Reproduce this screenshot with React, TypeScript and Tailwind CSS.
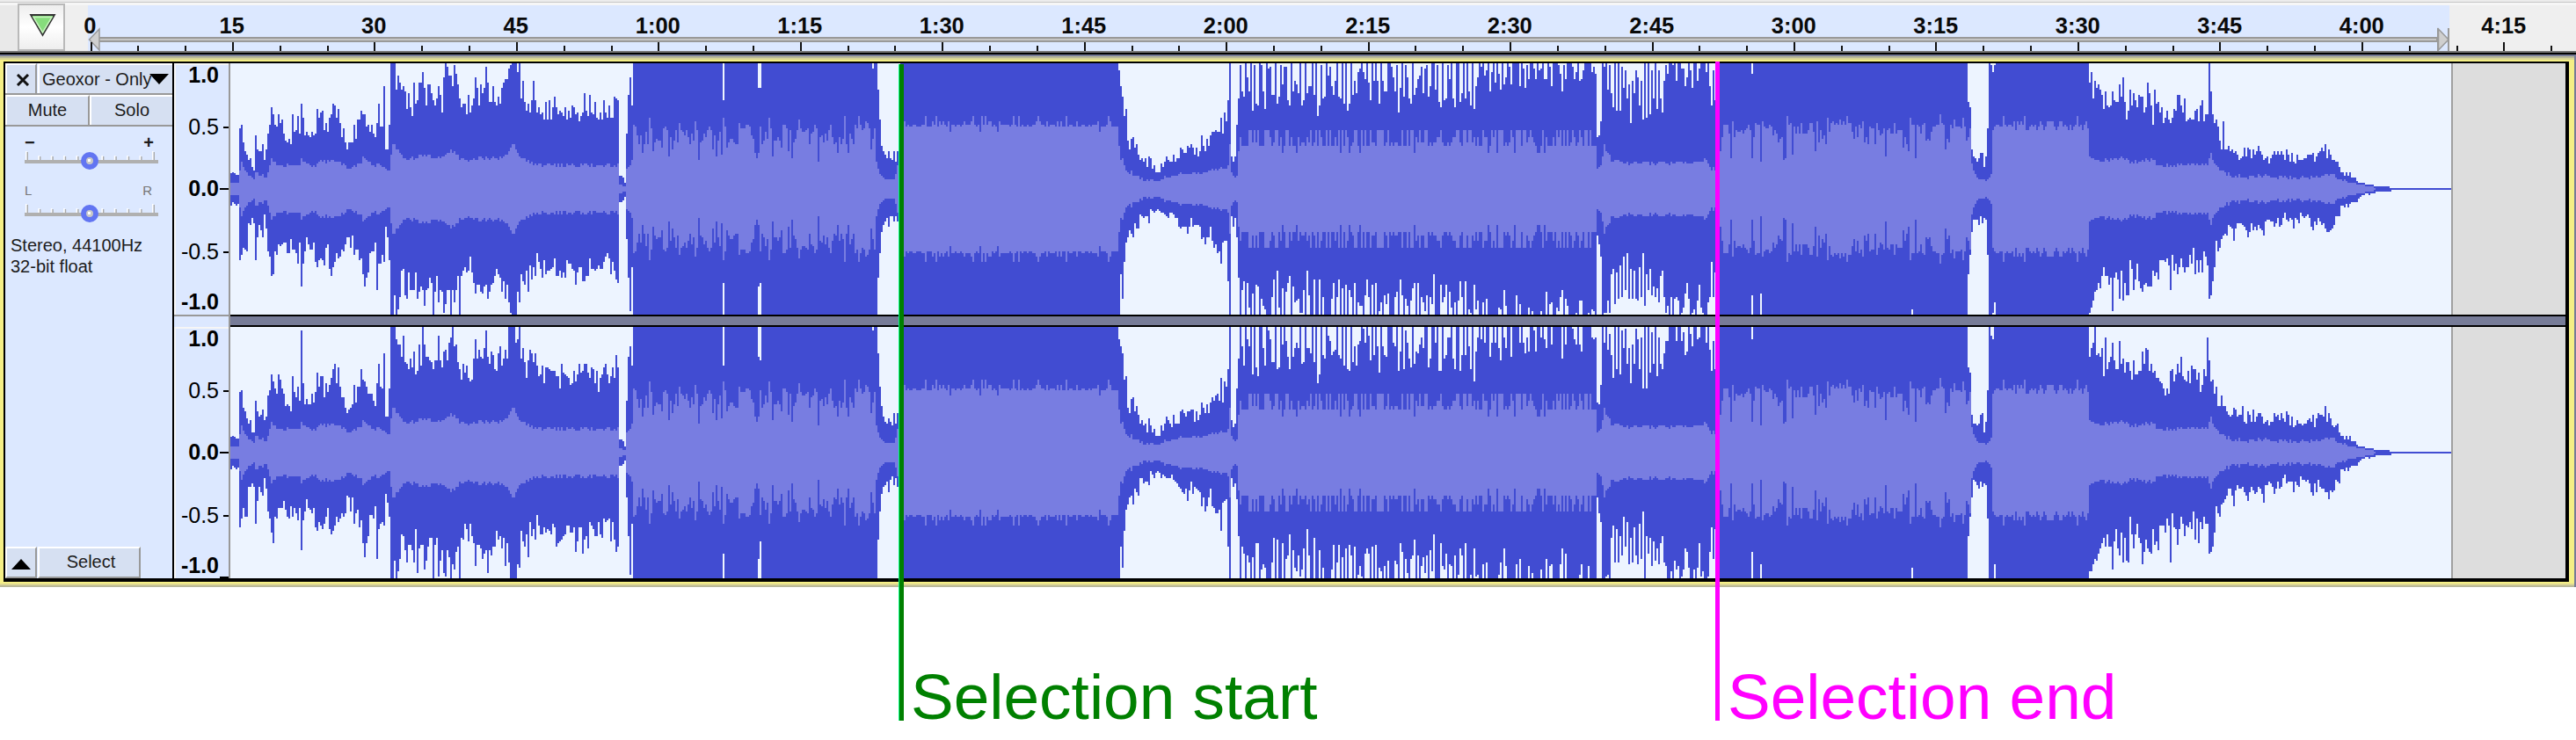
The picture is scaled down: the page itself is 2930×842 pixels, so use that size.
import React from "react";

const START = 262;
const END = 2788;
const COLS = (END - START) / 2;
const CENTER = 465;
const CEIL = 36;
const FLOOR = 894;

/* Runs of sample levels: first column (px), then one level per 2px column.
   Levels are thirds of a pixel below y = 60. */
type Run = [number, string];

const PEAK_TOP: Run[] = [
  [262, "412 408 412 418 418 258 246 306 336 348 366 360 390 402 282 330 336 336 312 366 330 276 246 186 210 246 252 210 240 228 276 300 306 294 312 210 270 264 216 276 174 222 282 270 282 288 270 282 276 192 222 204 198 264 240 270 222 210 174 180 222 192 240 288 258 306 330 306 306 306 246 294 228 228 198 210 210 252 246 270 246 276 288 240 174 252 252 114 330 330 246 36 36 36 126 78 102 126 114 132 192 138 186 216 102 174 162 102 102 66 120 180 108 108 138 162 180 156 114 144 204 84 36 48 78 78 114 42 72 108 156 186 174 174 210 144 204 180 156 84 120 180 108 138 120 48 102 168 168 114 168 180 150 174 120 102 90 90 54 42 36 36 36 66 36 156 96 168 198 174 204 162 96 162 204 186 210 204 228 168 228 162 228 186 150 186 210 198 204 216 186 228 198 222 180 186 210 204 234 216 204 138 198 216 144 204 210 168 222 228 204 228 162 204 222 180 222 222 150 156 162 420 420 426 444 276 144 84 180"],
  [822, "162"], [862, "120 120"], [992, "54"],
  [998, "126 228 318 336 348 360 336 360 366 336 372 336 228"],
  [1272, "60 114 150 216 192 300 330 294 288 324 312 348 366 360 372 360 390 354 360 396 384 408 408 408 378 390 372 354 366 372 372 348 372 360 360 324 330 342 342 318 324 312 324 348 324 354 336 282 318 336 294 318 282 270 270 264 270 270 222 276 204 234 162 36 354 372 354 246 156 42 132 150 36 84 132 36 198 42 174 180 36 42 132 192 36 54 48 144 144 36 174 150 42 108 48 48 162 180 36 132 96 108 138 36 180 162 36 138 114 114 36 144 36 216 180 42 156 150 36 78 48 114 144 96 36 150 156 36 174 36 198 174 36 144 96 138 66 54 36 66 90 36 102 162 36 96 36 96 174 36 96 132 132 36 36 48 84 132 42 204 120 36 150 42 84 156 174 36 144 120 90 78 48 138 54 42 150 114 36 36 126 42 168 186 36 162 156 42 90 36 156 186 36 36 168 168 36 150 36 42 114 36 192"],
  [1660, "168 138 36 156 36 132 180 36 192 114 84 36 48 36 78 60 36 132 66 36 102 36 72 126 36 108 84 36 48 108 36 36 36 36 114 36 54 120 42 90 36 36 54 90 36 60 54 36 90 90 36 48 114 36 36 36 42 72 132 42 90 36 36 36 48 90 66 36 96 90 60 36 36 36 36 66 48 72 288 282 234 36 48 36 126 42 138 186 36 198 36 198 48 120 60 156 108 240 96 138 60 84 180 96 228 36 222 36 210 60 156 36 192 60 156 204 96 42 72 36 36 42 36 96 36 36 54 54 114 84 36 60 120 36 36 96 54 36 36 36 66 36 114 180 60 162"],
  [1992, "72"],
  [2238, "168 186 330 354 360 372 360 342 342 390 354 258 36 42 66 42"],
  [2376, "102 66 156 96 120 108 126 144 192 132 180 186 180 132 162 168 168 108 150 84 168 228 198 126 180 138 162 186 144 150 150 204 186 102 138 180 246 126 174 168 204 186 240 222 198 228 240 222 192 198 144 144 180 204 156 234 228 222 228 228 198 192 234 180 162 234 210 210 36 132 210 240 228 252 300 330 234 330 330 318 336 330 342 336 348 366 360 354 324 354 324 330 360 330 348 336 318 336 348 366 360 354 378 360 348 336 348 336 348 336 348 366 330 348 372 342 372 378 348 366 366 366 360 360 348 348 348 342 372 354 342 336 324 336 312 360 330 348 366 366 372 372 390 408 408 420 408 420 408 426 426 426 438 444 444 444 444 450 450 450 450 450 456 456 456 456 456 456 456 456 456 462"],
];

const PEAK_BOTTOM: Run[] = [
  [262, "522 510 516 522 516 708 690 666 672 678 582 588 564 582 708 630 588 606 630 552 600 678 696 762 756 678 690 654 660 654 648 648 684 684 636 672 672 684 720 648 798 720 678 630 654 672 672 648 714 732 708 702 708 726 666 654 738 762 732 714 684 702 696 672 678 654 630 630 666 624 690 672 672 708 702 756 798 768 750 684 678 678 648 810 720 720 690 714 594 630 708 894 894 828 894 876 834 744 738 828 840 750 810 810 810 750 840 816 798 810 864 810 804 768 786 894 816 762 852 810 816 888 858 810 810 894 810 852 810 762 894 762 744 732 750 744 696 750 786 822 792 792 816 822 798 792 840 816 792 786 762 738 756 768 816 780 840 792 852 888 894 894 894 816 852 756 780 792 744 816 726 774 732 762 684 714 738 768 708 756 744 744 738 732 702 762 762 744 768 750 768 708 720 720 738 744 792 750 732 732 780 780 762 762 702 738 738 744 738 726 738 738 714 696 684 702 756 714 744 774 786 510 510 504 492 636 768 882 732"],
  [822, "786"], [862, "798 786"],
  [998, "768 684 612 588 576 564 594 558 558 576 558 576 708"],
  [1274, "756 840 714 648 630 606 618 630 582 600 600 552 558 564 558 558 582 534 540 546 540 534 540 546 546 552 558 564 546 546 552 564 564 594 600 594 594 594 618 594 564 594 588 588 588 594 636 630 654 630 630 594 642 666 654 684 678 720 648 642 642 780 894 558 594 564 630 768 894 810 780 894 786 870 894 822 894 792 798 894 840 864 876 894 894 894 834 774 894 744 870 894 804 894 816 786 762 894 798 852 846 840 888 888 810 894 744 828 894 894 774 894 894 774 894 834 894 894 894 894 840 786 894 834 774 894 804 894 792 894 810 834 894 786 894 852 864 864 894 828 774 834 894 792 894 786 894 882 852 894 828 858 822 894 894 894 834 816 894 774 828 894 840 864 894 846 804 786 894 786 894 834 852 882 828 894 834 858 756 894 894 894 792 852 834 792 894 816 870 894 852 894 846 852 874 816 780 894 864 780"],
  [1660, "780 834 894 780 894 876 888 894 792 876 846 894 894 852 894 840 894 894 894 894 894 894 870 876 894 810 864 894 894 894 894 894 828 894 858 894 894 894 894 870 894 882 894 894 894 894 882 894 894 816 894 858 852 894 894 870 882 834 810 894 840 864 894 894 894 894 888 894 846 846 894 894 894 888 894 876 882 894 624 654 696 894 888 888 846 888 756 738 858 750 840 726 834 696 810 684 840 738 840 744 840 846 732 834 684 864 756 810 738 828 798 834 804 852 762 744 834 888 864 894 834 894 840 834 846 894 888 870 822 786 840 894 888 876 894 846 792 870 888 894 894 852 834 714 834 750"],
  [1992, "828"], [2002, "822"], [2174, "876"],
  [2238, "756 690 612 570 570 570 588 558 582 564 570 690 894 894 888 852"],
  [2376, "888 870 846 816 810 786 804 762 732 762 762 792 768 882 768 750 774 840 744 846 786 828 828 708 738 810 774 720 780 804 816 792 786 798 798 798 744 762 750 774 708 708 708 714 702 726 810 690 744 720 756 732 702 732 750 732 732 690 720 666 756 708 750 708 750 678 696 726 840 828 780 732 642 678 666 636 624 618 624 588 594 600 642 600 582 582 582 588 594 606 630 612 582 606 594 606 588 600 606 624 576 570 570 576 576 594 582 564 594 588 564 546 570 576 564 570 600 564 570 582 546 558 564 558 552 564 594 606 576 588 564 576 588 582 600 612 612 606 600 588 558 558 558 522 522 528 516 528 516 510 510 510 510 498 492 486 486 480 480 486 480 480 480 474 474 474 474 474 474 474 474 474 468"],
];

const RMS_TOP: Run[] = [
  [262, "444 444 444 444 444 402 372 390 402 408 420 420 426 432 408 408 420 420 414 426 426 408 384 360 372 372 384 384 384 384 390"],
  [720, "246 252 282 312 282 342 312 270 312 222 258 336 306 294 300 300 324 258 252 264 354 288 330 300 264 306 240 264 270 282 264 288 312 276 300 234 264 366 306 300 276 288 264 252 264 330 282 354 300 270 348 222 252 324 306 294 294 306 312 312 240 258 258 258 246 246 252 282 294 342 360 342 252 312 300 270 294 222 258 354 300 300 288 300 324 246 246 258 336 264 360 306 294 264 228 258 270 270 264 258 312 276 270 246 258 372 288 282 306 276 300 264 246 288 312 306 342 288 312 294 216 312 342 276 294 312 246 258 216 246 264 258 234 240 258 330 294 258 372 396 414 420 426 432 432 432 432 432 432 414"],
  [1272, "318 366 360 384 402 408 414"],
  [1956, "336 288 246 246 246 276 360 234 288 264 270 270 264 276 264 258 246 264 360 288 240 246 246 372 234 252 258 258 246 252 282 264 276 306 294 288 366 360 216 246 240 348 252 276 252 276 240 276 276 276 264 240 240 270 336 234 306 264 294 282 312 222 270 240 234 246 240 246 228 246 234 246 216 240 240 270 294 252 288 246 258 234 306 288 312 252 258 258 312 240 264 282 276 258 354 264 258 276 276 240 276 264 264 264 324 288 312 336 222 246 246 360 246 252 276 246 240 300 294 300 270 252 252 246 246 210 240 246 330 294 306 246 258 228 252 252 252 258 222 252 300 288 258 378 402 414 426 432 432 432 432 438 432 426 414 264"],
];

/* Piecewise RMS envelope: x (px) and level. */
const RMS_POINTS: [number, number][] = [
  [322, 386], [341, 386], [342, 366], [346, 380], [358, 384], [362, 372], [370, 372], [376, 368], [384, 376], [390, 384], [396, 400], [404, 388], [410, 376], [413, 348], [418, 376], [426, 390], [429, 374], [438, 396], [442, 402], [444, 342], [446, 306], [450, 330], [458, 360], [470, 364], [480, 348], [490, 358], [502, 360], [510, 346], [512, 334], [516, 342], [524, 364], [532, 376], [540, 364], [548, 360], [556, 360], [568, 362], [577, 345], [583, 308], [588, 340], [594, 366], [606, 380], [640, 386], [703, 384], [704, 450], [710, 456], [712, 396], [716, 378], [719, 358],
  [1286, 410], [1296, 430], [1316, 440], [1324, 430], [1336, 424], [1346, 410], [1360, 414], [1374, 406], [1390, 396], [1396, 390], [1398, 306], [1399, 306], [1400, 408], [1404, 424], [1407, 414], [1408, 336], [1409, 300],
  [1815, 330], [1816, 398], [1820, 388], [1824, 320], [1832, 366], [1840, 375], [1880, 379], [1930, 374], [1940, 366], [1946, 396], [1954, 396],
  [2374, 264], [2376, 358], [2390, 372], [2414, 358], [2420, 372], [2446, 368], [2458, 386], [2480, 382], [2506, 384], [2511, 380], [2513, 342], [2518, 372], [2526, 408], [2540, 420], [2556, 426], [2574, 418], [2580, 426], [2628, 426], [2652, 414], [2662, 432], [2672, 444], [2684, 450], [2692, 456], [2702, 462], [2703, 466],
];

/* Where the right channel departs from the left one. */
const RIGHT_TOP: Run[] = [
  [342, "48"],
  [444, "36 36 36 78 96 96 138 66 156 162 180 144 174 120 198 186 96 168 36 96 138 138 150 156 180 150 150 66 150 174 120 114 150 90 72 36 102 96 156 180 216 162 192 168 210 222 216 144 78 144 114 138 144 108 48 138 162 120 132 180 186 126 102 168 144 114 144 36 36 36 36 90 78 36 144 108 156 210 150 114 126 156 126 168 204 198 168 228 174 174 180 186 186 186 204 204 246 162 192 198 204 210 234 228 186 222 198 162 192 186 162 162 192 210 174 180 228 186 258 210 198 174 162 198 228 204 174 210 132 174"],
  [2376, "138 108 90 36 132 126 138 108 204 72 180 156 138 90 150 180 180 84 162 144 192 156 156 186 216 150 198 198 186 186 120 162 108 114 186 162 192 186 210 210 222 228 246 270 246 264 186 180 222 198 162 192 138 204 216 222 186 228 168 180 180 216 192 258 234 180 204 72 150 222 216 264 240 306 306 270 306 306 324 336 342 336 312 318 342 336 336 306 360"],
];

const noise = (n: number) => {
  const s = Math.sin(n * 127.1 + 11.7) * 43758.5453;
  return s - Math.floor(s);
};
const snap = (v: number) => Math.round(v / 6) * 6;

function fill(levels: number[], runs: Run[]) {
  for (const [x, text] of runs) {
    const first = (x - START) / 2;
    text.split(" ").forEach((v, i) => {
      if (first + i < levels.length) levels[first + i] = Number(v);
    });
  }
}

function rmsLevel(x: number, i: number): number {
  const r = noise(i + 3);
  if (x >= 1028 && x < 1272) return r < 0.08 ? 217 : r < 0.3 ? 235 : r < 0.6 ? 247 : r < 0.96 ? 253 : 271;
  if (x >= 2262 && x < 2374) return r < 0.08 ? 217 : r < 0.28 ? 235 : r < 0.6 ? 247 : r < 0.85 ? 253 : 263;
  if (x >= 1409 && x < 1815) return r < 0.34 ? 264 : r < 0.5 ? 290 : r < 0.62 ? 306 : r < 0.92 ? 317 : 345;
  for (let p = 1; p < RMS_POINTS.length; p++) {
    const [x0, y0] = RMS_POINTS[p - 1];
    const [x1, y1] = RMS_POINTS[p];
    if (x >= x0 && x < x1) {
      return y0 + ((y1 - y0) * (x - x0)) / (x1 - x0) + (y0 < 440 ? (r - 0.5) * 14 : 0);
    }
  }
  return 252;
}

function buildChannel(right: boolean) {
  const top = new Array<number>(COLS).fill(CEIL);
  const bottom = new Array<number>(COLS).fill(FLOOR);
  fill(top, PEAK_TOP);
  fill(bottom, PEAK_BOTTOM);
  for (let i = 0; i < COLS; i++) {
    const x = START + i * 2;
    if (x >= 2720) {
      top[i] = 462;
      bottom[i] = 468;
    } else if (right) {
      const wobble = (v: number, r: number) => {
        const amp = Math.abs(v - CENTER);
        if (amp > 425 || amp < 60) return v;
        return Math.min(FLOOR, Math.max(CEIL, v + snap((r - 0.5) * amp * 0.2)));
      };
      top[i] = wobble(top[i], noise(i + 900));
      bottom[i] = wobble(bottom[i], noise(i + 2900));
    }
  }
  if (right) fill(top, RIGHT_TOP);

  const rms = Array.from({ length: COLS }, (_, i) => snap(rmsLevel(START + i * 2, i) - 1));
  fill(rms, RMS_TOP);

  let peakPath = "";
  let rmsPath = "";
  const px = (level: number) => Math.round(level / 3 - 12);
  for (let i = 0; i < COLS; i++) {
    const x = i * 2;
    peakPath += `M${x} ${px(top[i])}h2V${px(bottom[i])}h-2z`;
    if (START + x < 2702) {
      const level = Math.max(rms[i], top[i]);
      rmsPath += `M${x} ${px(level)}h2V${px(930 - level)}h-2z`;
    }
  }
  return { peakPath, rmsPath };
}

const LEFT = buildChannel(false);
const RIGHT = buildChannel(true);

const TIMES = ["0", "15", "30", "45", "1:00", "1:15", "1:30", "1:45", "2:00", "2:15", "2:30", "2:45", "3:00", "3:15", "3:30", "3:45", "4:00", "4:15"];

function Channel({ data }: { data: { peakPath: string; rmsPath: string } }) {
  return (
    <div className="flex h-[286px] w-[2656px] bg-[#dddddd]">
      <svg width={2526} height={286} shapeRendering="crispEdges" className="block shrink-0 bg-[#edf4ff]">
        <path d={data.peakPath} fill="#414cd2" />
        <path d={data.rmsPath} fill="#787de1" />
      </svg>
      <div className="w-[2px] bg-[#a0a0a0]" />
    </div>
  );
}

function ScaleRow({ label, bold, tick }: { label: string; bold?: boolean; tick: string }) {
  return (
    <div className="flex h-[26px] items-center justify-end">
      <span className={bold ? "mb-[2px] text-[25px] leading-[24px] font-bold" : "mb-[2px] text-[25px] leading-[24px]"}>{label}</span>
      <span className={tick} />
    </div>
  );
}

function VerticalScale({ last }: { last?: boolean }) {
  return (
    <div className="flex h-[286px] flex-col border-t-2 border-l-2 border-t-[#f6f6f6] border-l-[#f6f6f6]">
      <div className="mt-[-1px]">
        <ScaleRow label="1.0" bold tick="w-[11px]" />
      </div>
      <div className="h-[33px]" />
      <ScaleRow label="0.5" tick="ml-[5px] h-[2px] w-[6px] bg-black" />
      <div className="h-[44px]" />
      <ScaleRow label="0.0" bold tick="ml-[1px] h-[2px] w-[10px] bg-black" />
      <div className="h-[46px]" />
      <ScaleRow label="-0.5" tick="ml-[5px] h-[2px] w-[6px] bg-black" />
      <div className="h-[31px]" />
      <ScaleRow label="-1.0" bold tick="w-[11px]" />
      {last && <div className="mt-[-1px] h-[2px] w-[10px] self-end bg-black" />}
    </div>
  );
}

function Slider({ left, right, small }: { left: string; right: string; small?: boolean }) {
  return (
    <div className="flex h-[60px] w-[152px] flex-col">
      <div className={small ? "mt-[-4px] mb-[4px] flex h-[20px] justify-between pr-[7px] text-[15px] leading-[20px] text-[#777]" : "flex h-[20px] justify-between pr-[5px] text-[20px] leading-[22px] font-bold"}>
        <span>{left}</span>
        <span>{right}</span>
      </div>
      <svg width={152} height={24} className="block">
        {Array.from({ length: 11 }, (_, i) => {
          const x = 2 + i * 14.4;
          const h = i === 0 || i === 10 ? 11 : 6;
          return (
            <g key={i}>
              <rect x={x - 1} y={12 - h} width={1.6} height={h} fill="#fff" />
              <rect x={x + 0.6} y={12 - h + 1} width={1.4} height={h} fill="#aaa" />
            </g>
          );
        })}
        <rect x={0} y={11} width={152} height={4} fill="#b0b0b0" />
        <circle cx={74} cy={12} r={7} fill="#c8c8c8" stroke="#6275f2" strokeWidth={6} />
        <rect x={72} y={10} width={3} height={3} fill="#fff" />
      </svg>
    </div>
  );
}

function ControlPanel() {
  return (
    <div className="flex h-[586px] w-[190px] flex-col bg-[#dce8ff] text-[20px] text-[#1c1c1c]">
      <div className="flex h-[36px] border-b-2 border-[#999]">
        <div className="flex w-[36px] items-center justify-center border-t-2 border-r-2 border-l-2 border-t-white border-r-[#999] border-l-white bg-[#d6e0f2] pl-[3px]">
          <svg width={16} height={14} className="mt-[2px] block">
            <path d="M2 1L14 13M14 1L2 13" stroke="#111" strokeWidth={3} />
          </svg>
        </div>
        <div className="ml-[1px] flex flex-1 items-center border-t-2 border-l-2 border-white bg-[#d6e0f2] pl-[3px]">
          <span className="w-[122px] whitespace-nowrap">Geoxor - Only</span>
          <svg width={22} height={12} className="block">
            <path d="M0 0H22L11 12z" fill="#000" />
          </svg>
        </div>
      </div>
      <div className="flex h-[36px] border-b-2 border-[#999]">
        <div className="flex w-[96px] items-center justify-center border-t-2 border-r-2 border-l-2 border-t-white border-r-[#999] border-l-white bg-[#d6e0f2] pb-[2px]">Mute</div>
        <div className="flex flex-1 items-center justify-center border-t-2 border-l-2 border-white bg-[#d6e0f2] pb-[2px]">Solo</div>
      </div>
      <div className="mt-[7px] ml-[22px]">
        <Slider left="−" right="+" />
        <Slider left="L" right="R" small />
      </div>
      <div className="mt-[-4px] ml-[6px] flex flex-col leading-[24px]">
        <span>Stereo, 44100Hz</span>
        <span>32-bit float</span>
      </div>
      <div className="mt-auto flex h-[36px]">
        <div className="flex w-[36px] items-center justify-center border-2 border-t-white border-r-[#999] border-b-[#999] border-l-white bg-[#d6e0f2]">
          <svg width={22} height={12} className="mt-[4px] block">
            <path d="M0 12H22L11 0z" fill="#000" />
          </svg>
        </div>
        <div className="ml-[1px] flex w-[117px] items-center justify-center border-2 border-t-white border-r-[#999] border-b-[#999] border-l-white bg-[#d6e0f2] pb-[2px] pl-[4px]">Select</div>
      </div>
    </div>
  );
}

function TimeRuler() {
  return (
    <div className="grid h-[58px] w-[2930px] grid-cols-1 grid-rows-1 overflow-hidden bg-[#efefef]">
      <div className="flex flex-col [grid-area:1/1]">
        <div className="h-[2px] bg-[#ececec]" />
        <div className="h-[1px] bg-[#c6c6c6]" />
        <div className="h-[3px] bg-[#f6f6f6]" />
        <div className="flex flex-1">
          <div className="w-[20px] bg-[#e9e9e9]" />
          <div className="mt-[-2px] flex w-[54px] justify-center border-2 border-[#b9b9b9] bg-linear-to-b from-[#eeeeee] via-white to-[#eeeeee] pt-[9px] pl-[3px]">
            <svg width={32} height={28} className="block">
              <path d="M2 2H29L15.500 25z" fill="#86dc7c" stroke="#333" strokeWidth={1.8} />
              <path d="M5 4.500H26L15.500 22z" fill="none" stroke="#c6f2bd" strokeWidth={1.500} />
            </svg>
          </div>
          <div className="w-[26px]" />
          <div className="w-[2686px] bg-[#dce8ff]" />
        </div>
      </div>
      <svg width={2930} height={58} className="block [grid-area:1/1]">
        <rect x={113} y={42} width={2660} height={6} fill="#999" />
        <rect x={113} y={44} width={2658} height={2} fill="#c6c6c6" />
        <path d="M113 33L101.500 45L113 57z" fill="#cfcfcf" stroke="#999" strokeWidth={1.500} />
        <path d="M2773.500 33L2785 45L2773.500 57z" fill="#cfcfcf" stroke="#999" strokeWidth={1.500} />
        <rect x={2784} y={32} width={2} height={26} fill="#999" />
        <rect x={2772} y={32} width={2} height={26} fill="#999" />
        {Array.from({ length: 53 }, (_, i) => {
          const x = Math.round(102.500 + i * 53.820);
          return <rect key={i} x={x} y={i % 3 ? 52 : 48} width={2} height={i % 3 ? 6 : 10} fill="#111" />;
        })}
      </svg>
      <div className="ml-[21.500px] flex [grid-area:1/1]">
        {TIMES.map((t) => (
          <span key={t} className="w-[161.500px] shrink-0 pt-[15px] text-center text-[25.500px] leading-[28px] font-bold text-[#0a0a0a]">
            {t}
          </span>
        ))}
      </div>
    </div>
  );
}

export default function App() {
  return (
    <div className="relative flex h-[842px] w-[2930px] flex-col overflow-hidden bg-white font-['Liberation_Sans',Arial,sans-serif] text-black">
      <TimeRuler />
      <div className="h-[2px] bg-[#777]" />
      <div className="h-[2px] bg-black" />
      <div className="flex h-[606px] bg-[#777c98]">
        <div className="mt-[2px] flex h-[604px] w-[2928px] flex-col">
          <div className="h-[2px] bg-[#b9b899]" />
          <div className="h-[2px] bg-[#d8d595]" />
          <div className="flex flex-1 border-t-[2px] border-r-[6px] border-l-[4px] border-[#f5ef86]">
            <div className="flex w-[2918px] border-t-2 border-r-[4px] border-b-[4px] border-l-2 border-black">
              <ControlPanel />
              <div className="w-[2px] bg-black" />
              <div className="flex w-[64px] flex-col border-r-2 border-[#999] bg-[#dce8ff]">
                <VerticalScale />
                <div className="mb-[12px] h-[2px] bg-[#999]" />
                <VerticalScale last />
              </div>
              <div className="flex w-[2656px] flex-col">
                <Channel data={LEFT} />
                <div className="h-[14px] border-y-2 border-black bg-[#777c98]" />
                <Channel data={RIGHT} />
              </div>
            </div>
          </div>
          <div className="h-[2px] bg-[#f5ef86]" />
          <div className="h-[2px] bg-[#dcd693]" />
          <div className="h-[2px] bg-[#b9b899]" />
        </div>
      </div>
      <div className="absolute top-[73px] left-[1022px] h-[747px] w-[6px] border-l border-[#00ff80] bg-[#008000]" />
      <div className="absolute top-[70px] left-[1951px] h-[750px] w-[5px] bg-[#ff00ff]" />
      <span className="absolute top-[751px] left-[1036px] text-[73px] leading-[84px] whitespace-nowrap text-[#008000]">Selection start</span>
      <span className="absolute top-[751px] left-[1965px] text-[73px] leading-[84px] whitespace-nowrap text-[#ff00ff]">Selection end</span>
    </div>
  );
}
